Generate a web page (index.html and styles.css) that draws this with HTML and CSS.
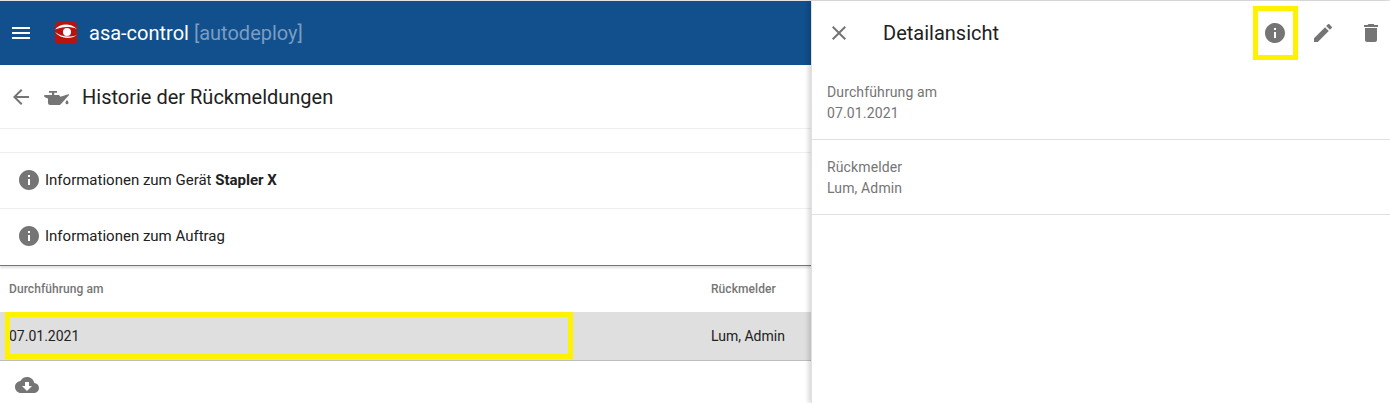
FILE: index.html
```html
<!DOCTYPE html>
<html lang="de">
<head>
<meta charset="utf-8">
<title>Historie der Rückmeldungen</title>
<link rel="stylesheet" href="styles.css">
</head>
<body>
<div class="app">
  <main class="main">
    <header class="topbar">
      <svg class="menu" width="24" height="24" viewBox="0 0 24 24"><path d="M3 18h18v-2H3v2zm0-5h18v-2H3v2zm0-7v2h18V6H3z"/></svg>
      <svg class="logo" width="24" height="24" viewBox="0 0 24 24">
        <rect x="1" y="1" width="22" height="22" rx="3.5" fill="#b8130f"/>
        <path d="M1 8.500C6 2.500 16 1.500 23 8C16 5 8 5.500 1 8.500Z" fill="#fff"/>
        <path d="M1 11C6 17.500 16 19 23 14C16 16.500 8 16.500 1 11Z" fill="#fff"/>
        <circle cx="13" cy="11" r="4" fill="#fff"/>
      </svg>
      <span class="brand">asa-control <span class="brand-dim">[autodeploy]</span></span>
    </header>
    <section class="titlebar">
      <svg class="ico back" width="24" height="24" viewBox="0 0 24 24"><path d="M20 11H7.830l5.590-5.590L12 4l-8 8 8 8 1.410-1.410L7.830 13H20v-2z"/></svg>
      <svg class="ico oil" width="26" height="24" viewBox="0 0 26 24"><path d="M5 6h8v1.700H10.200V10H15l1.500 1.800L25 9l-.3 1.400-7.700 8.600c-.6.700-1.100 1-2 1H6c-1 0-2-.8-2-2v-4.500L.3 12V10H8V7.700H5z"/><path d="M23 15c.9 1.100 1.500 1.900 1.500 2.700a1.500 1.500 0 0 1-3 0c0-.8.600-1.600 1.500-2.700z"/></svg>
      <h1 class="title">Historie der Rückmeldungen</h1>
    </section>
    <div class="spacer"></div>
    <div class="info-row">
      <svg class="ico" width="24" height="24" viewBox="0 0 24 24"><path d="M12 2C6.480 2 2 6.480 2 12s4.480 10 10 10 10-4.480 10-10S17.520 2 12 2zm1 15h-2v-6h2v6zm0-8h-2V7h2v2z"/></svg>
      <span>Informationen zum Gerät <b>Stapler X</b></span>
    </div>
    <div class="info-row last">
      <svg class="ico" width="24" height="24" viewBox="0 0 24 24"><path d="M12 2C6.480 2 2 6.480 2 12s4.480 10 10 10 10-4.480 10-10S17.520 2 12 2zm1 15h-2v-6h2v6zm0-8h-2V7h2v2z"/></svg>
      <span>Informationen zum Auftrag</span>
    </div>
    <div class="table-head">
      <span class="col-a">Durchführung am</span>
      <span class="col-b">Rückmelder</span>
    </div>
    <div class="table-row">
      <span class="col-a">07.01.2021</span>
      <span class="col-b">Lum, Admin</span>
      <div class="mark mark-row"></div>
    </div>
    <div class="foot">
      <svg class="ico" width="24" height="24" viewBox="0 0 24 24"><path d="M19.350 10.040C18.670 6.590 15.640 4 12 4 9.110 4 6.600 5.640 5.350 8.040 2.340 8.360 0 10.910 0 14c0 3.310 2.690 6 6 6h13c2.760 0 5-2.240 5-5 0-2.640-2.050-4.780-4.650-4.960zM17 13l-5 5-5-5h3V9h4v4h3z"/></svg>
    </div>
  </main>
  <aside class="panel">
    <div class="panel-head">
      <svg class="ico close" width="24" height="24" viewBox="0 0 24 24"><path d="M19 6.410L17.590 5 12 10.590 6.410 5 5 6.410 10.590 12 5 17.590 6.410 19 12 13.410 17.590 19 19 17.590 13.410 12z"/></svg>
      <h2 class="panel-title">Detailansicht</h2>
      <div class="actions">
        <div class="action">
          <svg class="ico" width="24" height="24" viewBox="0 0 24 24"><path d="M12 2C6.480 2 2 6.480 2 12s4.480 10 10 10 10-4.480 10-10S17.520 2 12 2zm1 15h-2v-6h2v6zm0-8h-2V7h2v2z"/></svg>
          <div class="mark mark-action"></div>
        </div>
        <div class="action">
          <svg class="ico" width="24" height="24" viewBox="0 0 24 24"><path d="M3 17.250V21h3.750L17.810 9.940l-3.750-3.750L3 17.250zM20.710 7.040c.39-.39.39-1.020 0-1.410l-2.340-2.340c-.39-.39-1.020-.39-1.410 0l-1.830 1.830 3.750 3.750 1.830-1.830z"/></svg>
        </div>
        <div class="action">
          <svg class="ico" width="24" height="24" viewBox="0 0 24 24"><path d="M6 19c0 1.100.9 2 2 2h8c1.100 0 2-.9 2-2V7H6v12zM19 4h-3.500l-1-1h-5l-1 1H5v2h14V4z"/></svg>
        </div>
      </div>
    </div>
    <div class="field">
      <div>Durchführung am</div>
      <div>07.01.2021</div>
    </div>
    <div class="field">
      <div>Rückmelder</div>
      <div>Lum, Admin</div>
    </div>
  </aside>
</div>
</body>
</html>
```

FILE: styles.css
```css
* { box-sizing: border-box; }
html, body { margin: 0; height: 100%; overflow: hidden; }
body { font-family: Roboto, "Liberation Sans", sans-serif; font-size: 14px; color: #212121; background: #fff; }
.app { display: flex; height: 403px; padding-top: 1px; background: linear-gradient(#e2e2e2 1px, #fff 1px); }
.main { width: 811px; flex: none; display: flex; flex-direction: column; }
.ico { fill: #757575; flex: none; display: block; }
.topbar { height: 64px; background: #114f8d; display: flex; align-items: center; padding-left: 9px; flex: none; }
.menu { fill: #fff; }
.logo { margin-left: 21px; }
.brand { margin-left: 11px; font-size: 20px; color: #fff; }
.brand-dim { color: #7b9dc1; }
.titlebar { height: 64px; display: flex; align-items: center; padding-left: 9px; border-bottom: 1px solid #efefef; flex: none; }
.oil { margin-left: 11px; }
.title { margin: 0 0 0 12px; font-size: 20px; font-weight: 400; }
.spacer { height: 23px; flex: none; }
.info-row { height: 56px; display: flex; align-items: center; gap: 4px; padding: 0 0 1px 17px; border-top: 1px solid #efefef; font-size: 15px; flex: none; }
.info-row b { font-weight: 700; }
.info-row.last { height: 58px; padding-bottom: 2px; border-bottom: 1px solid #757575; box-shadow: 0 2px 2px rgba(0,0,0,.12); }
.table-head { height: 46px; display: flex; align-items: center; font-size: 12px; font-weight: 500; letter-spacing: .07px; color: #757575; flex: none; }
.table-row { position: relative; height: 49px; display: flex; align-items: center; background: #dfdfdf; border-bottom: 1px solid #bdbdbd; flex: none; }
.col-a { width: 711px; padding-left: 9px; flex: none; }
.foot { padding: 12px 0 0 15px; }
.mark { position: absolute; border: 5px solid #fff200; pointer-events: none; }
.mark-row { left: 5px; top: 0; width: 568px; height: 47px; }
.panel { flex: 1; display: flex; flex-direction: column; border-left: 1px solid #e0e0e0; box-shadow: -3px 0 4px rgba(0,0,0,.14); background: #fff; position: relative; }
.panel-head { height: 64px; display: flex; align-items: center; padding-left: 15px; flex: none; }
.panel-title { margin: 0 0 0 32px; font-size: 20px; font-weight: 400; }
.actions { margin-left: auto; display: flex; gap: 24px; padding-right: 7px; }
.action { position: relative; width: 24px; height: 24px; }
.mark-action { left: -10px; top: -15px; width: 45px; height: 54px; }
.field { padding: 17px 15px 0; line-height: 21px; height: 75px; color: #757575; letter-spacing: .13px; border-bottom: 1px solid #e0e0e0; flex: none; }
```
